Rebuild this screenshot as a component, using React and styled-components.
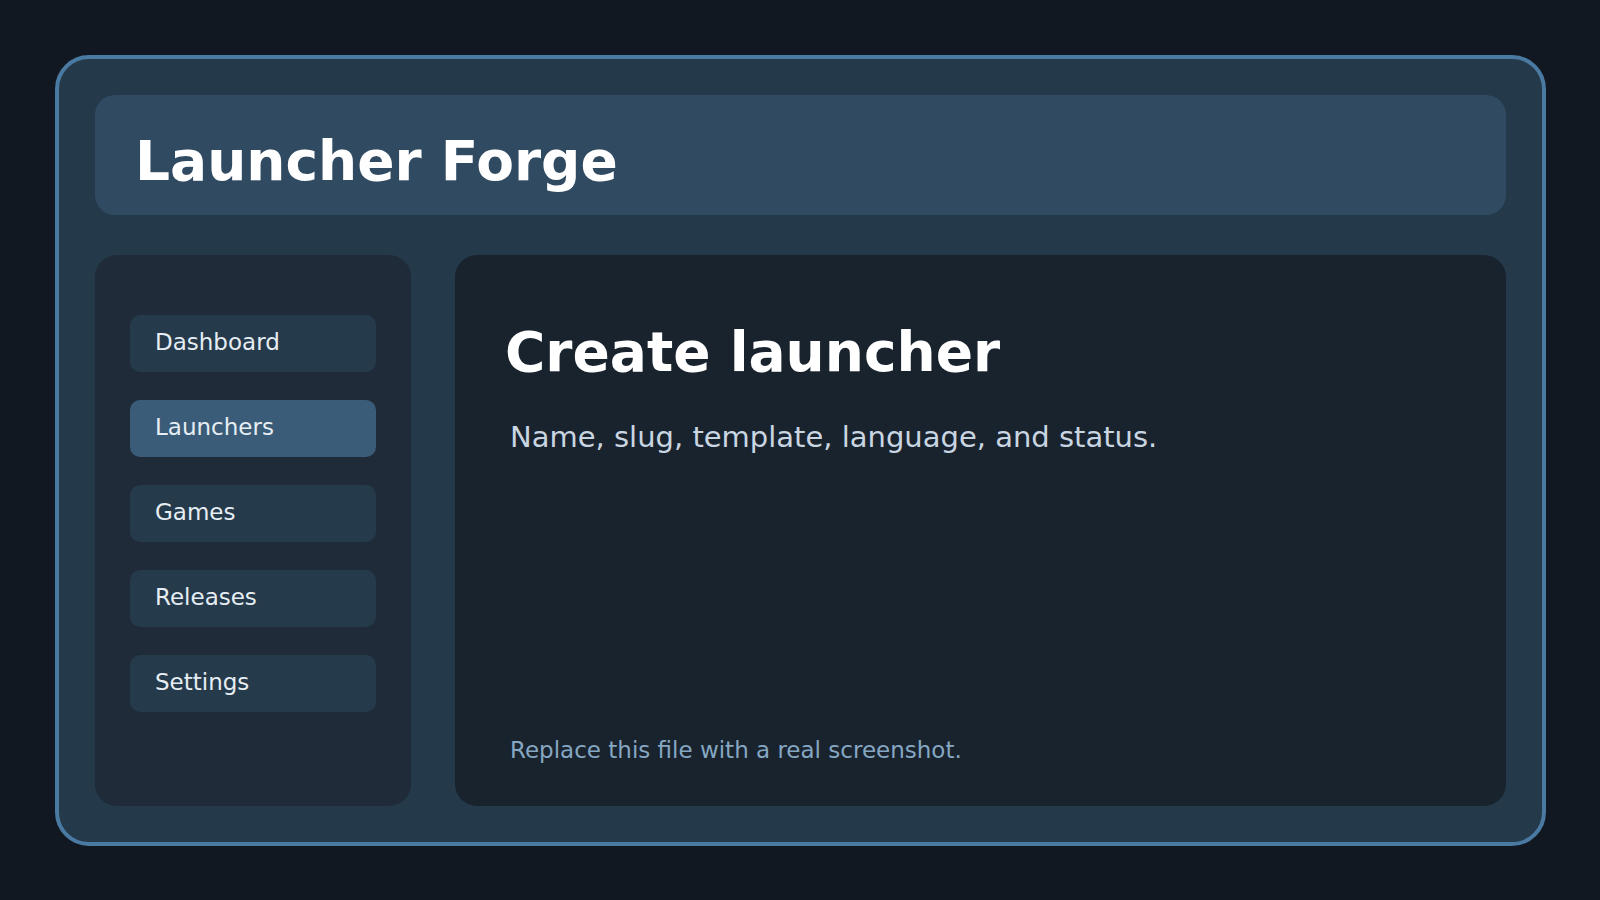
import React from "react";
import styled, { createGlobalStyle } from "styled-components";

const NAV_ITEMS = ["Dashboard", "Launchers", "Games", "Releases", "Settings"];

const GlobalStyle = createGlobalStyle`
  html, body {
    margin: 0;
    padding: 0;
    background: #111821;
  }
  body {
    font-family: "DejaVu Sans", "Noto Sans", sans-serif;
    color: #ffffff;
  }
`;

const Page = styled.div`
  width: 1600px;
  height: 900px;
  padding: 55px;
  box-sizing: border-box;
`;

const Frame = styled.div`
  width: 1491px;
  height: 791px;
  flex: none;
  box-sizing: border-box;
  border: 4px solid #4a79a1;
  border-radius: 34px;
  background: #24394a;
  padding: 36px;
  display: flex;
  flex-direction: column;
  gap: 40px;
`;

const Header = styled.header`
  height: 120px;
  flex: none;
  border-radius: 20px;
  background: #304b61;
  display: flex;
  align-items: center;
  padding: 12px 40px 0;
  box-sizing: border-box;
`;

const Title = styled.h1`
  margin: 0;
  font-size: 55px;
  font-weight: 700;
  line-height: normal;
  color: #ffffff;
`;

const Body = styled.div`
  flex: 1;
  display: flex;
  gap: 44px;
`;

const Sidebar = styled.nav`
  width: 316px;
  flex: none;
  border-radius: 22px;
  background: #1f2b38;
  padding: 60px 35px;
  box-sizing: border-box;
  display: flex;
  flex-direction: column;
  gap: 28px;
`;

const NavItem = styled.div`
  height: 57px;
  box-sizing: border-box;
  border-radius: 10px;
  background: ${(p) => (p.$active ? "#3b5c78" : "#253a4b")};
  display: flex;
  align-items: center;
  padding: 0 0 3px 25px;
  font-size: 23px;
  color: #e6edf3;
`;

const Main = styled.main`
  flex: 1;
  border-radius: 22px;
  background: #19232e;
  padding: 65px 48px 43px 50px;
  box-sizing: border-box;
  display: flex;
  flex-direction: column;
`;

const PageTitle = styled.h2`
  margin: 0;
  font-size: 55px;
  font-weight: 700;
  line-height: normal;
  color: #ffffff;
`;

const Subtitle = styled.p`
  margin: 36px 0 0 5px;
  font-size: 29px;
  line-height: normal;
  color: #c9d6e2;
`;

const Footnote = styled.p`
  margin: auto 0 0 5px;
  font-size: 23px;
  line-height: normal;
  color: #86a7c2;
`;

export default function App() {
  return (
    <>
      <GlobalStyle />
      <Page>
        <Frame>
          <Header>
            <Title>Launcher Forge</Title>
          </Header>
          <Body>
            <Sidebar>
              {NAV_ITEMS.map((item) => (
                <NavItem key={item} $active={item === "Launchers"}>
                  {item}
                </NavItem>
              ))}
            </Sidebar>
            <Main>
              <PageTitle>Create launcher</PageTitle>
              <Subtitle>Name, slug, template, language, and status.</Subtitle>
              <Footnote>Replace this file with a real screenshot.</Footnote>
            </Main>
          </Body>
        </Frame>
      </Page>
    </>
  );
}
